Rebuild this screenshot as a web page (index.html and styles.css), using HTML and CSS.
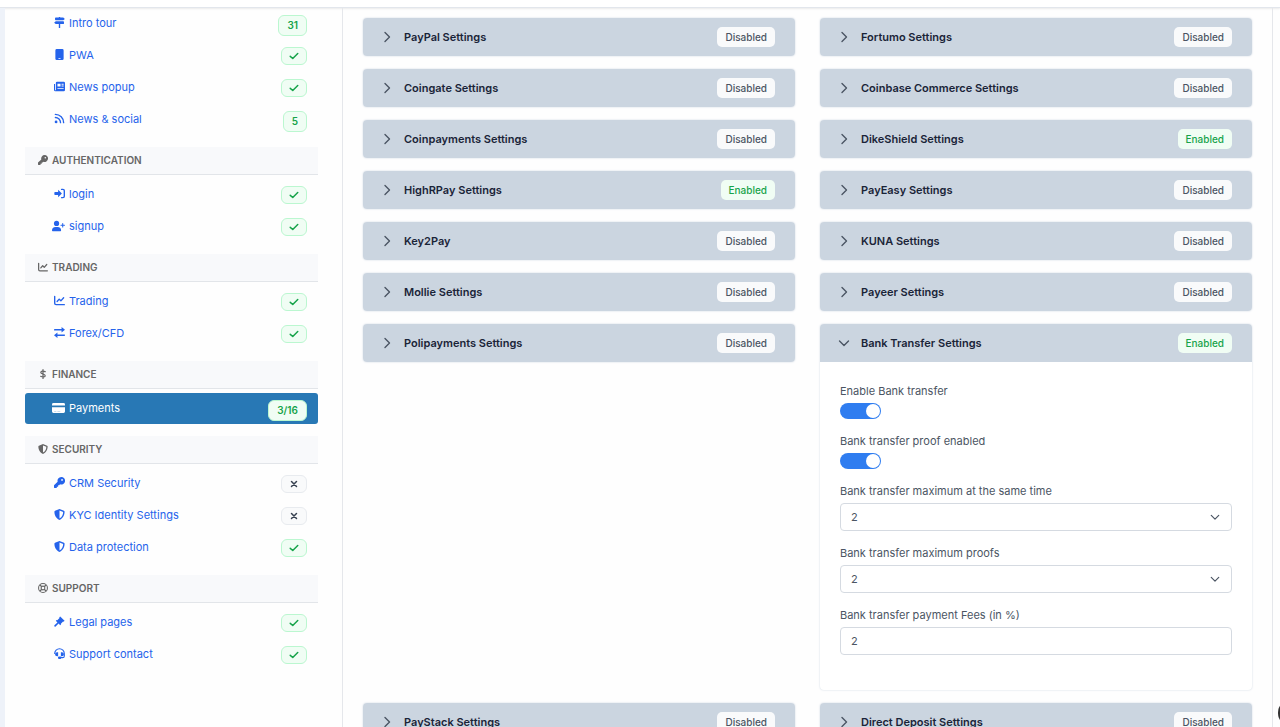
FILE: index.html
```
<!DOCTYPE html>
<html lang="en">
<head>
  <meta charset="UTF-8" />
  <meta name="viewport" content="width=device-width, initial-scale=1.0"/>
  <title>Payments - Settings</title>
  <link rel="stylesheet" href="styles.css">
</head>
<body>

  <!-- Icons -->
  <svg class="sprite" xmlns="http://www.w3.org/2000/svg">
    <symbol id="i-signs" viewBox="0 0 16 16"><path d="M7 0h2v.8h4.500l2.300 2-2.300 2H2.500a1 1 0 0 1-1-1v-2a1 1 0 0 1 1-1H7zM2.500 6.300h11a1 1 0 0 1 1 1v2a1 1 0 0 1-1 1h-11l-2.300-2zM7 10.300h2V16H7z"/></symbol>
    <symbol id="i-mobile" viewBox="0 0 16 16"><path fill-rule="evenodd" d="M4 0h8a2 2 0 0 1 2 2v12a2 2 0 0 1-2 2H4a2 2 0 0 1-2-2V2a2 2 0 0 1 2-2zM6.500 13.200v.8h3v-.8z"/></symbol>
    <symbol id="i-news" viewBox="0 0 16 16"><path fill-rule="evenodd" d="M5 1h9a2 2 0 0 1 2 2v10a2 2 0 0 1-2 2H2a2 2 0 0 1-2-2V4.500h1.500V13a.6.6 0 0 0 1.200 0V3A2 2 0 0 1 5 1zM5 4v4h4.500V4zM11 4v1.300h3V4zM11 6.700V8h3V6.700zM5 10v1.300h9V10z"/></symbol>
    <symbol id="i-rss" viewBox="0 0 16 16"><circle cx="3" cy="13" r="2"/><path fill="none" stroke="currentColor" stroke-width="2" stroke-linecap="round" d="M2 6.500A7.500 7.500 0 0 1 9.500 14M2 2a12 12 0 0 1 12 12"/></symbol>
    <symbol id="i-key" viewBox="0 0 16 16"><path fill-rule="evenodd" d="M10.500 0a5.500 5.500 0 1 1-1.700 10.700L7.500 12H6v2H4v2H.7a.7.700 0 0 1-.7-.7V12l5.300-5a5.500 5.500 0 0 1 5.200-7zM11.700 3a1.300 1.300 0 1 0 0 2.600 1.300 1.300 0 0 0 0-2.600z"/></symbol>
    <symbol id="i-login" viewBox="0 0 16 16"><path d="M6 2.500 11.500 8 6 13.500V10.200H1.500a1 1 0 0 1-1-1V6.800a1 1 0 0 1 1-1H6z"/><path fill="none" stroke="currentColor" stroke-width="2" stroke-linecap="round" d="M11 2h2a2 2 0 0 1 2 2v8a2 2 0 0 1-2 2h-2"/></symbol>
    <symbol id="i-user" viewBox="0 0 20 16"><circle cx="7" cy="4" r="4"/><path d="M5.500 9.500h3A5.500 5.500 0 0 1 14 15a1 1 0 0 1-1 1H1a1 1 0 0 1-1-1 5.500 5.500 0 0 1 5.500-5.500z"/><path fill="none" stroke="currentColor" stroke-width="1.600" stroke-linecap="round" d="M16.500 4v5.500M13.800 6.700h5.400"/></symbol>
    <symbol id="i-chart" viewBox="0 0 16 16"><path fill="none" stroke="currentColor" stroke-width="2" stroke-linecap="round" stroke-linejoin="round" d="M1 2v10a2 2 0 0 0 2 2h12M4.500 9.500 7.500 6l2.500 2.500L14 4"/></symbol>
    <symbol id="i-swap" viewBox="0 0 16 16"><path d="M11 0l5 4-5 4V5.200H1a1 1 0 0 1 0-2.200h10zM5 8v2.800h10a1 1 0 0 1 0 2.200H5V16l-5-4z"/></symbol>
    <symbol id="i-dollar" viewBox="0 0 16 16"><path fill="none" stroke="currentColor" stroke-width="2" stroke-linecap="round" d="M8 1v14M11.500 4.200C8 2.600 4.500 3 4.500 5.400c0 3.300 7 1.900 7 5.200 0 2.400-3.800 2.900-7.200 1.100"/></symbol>
    <symbol id="i-card" viewBox="0 0 18 16"><path d="M2 1h14a2 2 0 0 1 2 2v1.500H0V3a2 2 0 0 1 2-2z"/><path fill-rule="evenodd" d="M0 7h18v6a2 2 0 0 1-2 2H2a2 2 0 0 1-2-2zM3 12v.6h3V12zM7.500 12v.6h4V12z"/></symbol>
    <symbol id="i-shield" viewBox="0 0 16 16"><path fill-rule="evenodd" d="M8 0l6.500 2.600A1.500 1.500 0 0 1 15.400 4c0 4-1.600 9-7.400 12C2.200 13 .6 8 .6 4a1.500 1.500 0 0 1 .9-1.400zM8 2.200v11.500C12 11.400 13.300 8 13.300 4.300z"/></symbol>
    <symbol id="i-ring" viewBox="0 0 16 16"><g fill="none" stroke="currentColor" stroke-width="1.700"><circle cx="8" cy="8" r="7.100"/><circle cx="8" cy="8" r="3"/><path stroke-width="2.200" d="M3 3l3 3M13 3l-3 3M3 13l3-3M13 13l-3-3"/></g></symbol>
    <symbol id="i-gavel" viewBox="0 0 16 16"><path d="M9 .6l6.400 6.400-1.300 1.300-.9-.3-3.200 3.200.3.900L9 13.400 6.700 11l-4.300 4.400a1.300 1.300 0 0 1-1.800-1.800L5 9.300 2.600 7l1.300-1.300.9.300L8 2.800l-.3-.9z"/></symbol>
    <symbol id="i-headset" viewBox="0 0 16 16"><path fill="none" stroke="currentColor" stroke-width="1.600" stroke-linecap="round" d="M1 8a7 7 0 0 1 14 0v3.500a2.500 2.500 0 0 1-2.500 2.500H9"/><path d="M4.500 6H6v6H4.500a3 3 0 0 1 0-6zM10 6h1.500a3 3 0 0 1 0 6H10zM7.500 12.500H10V16H7.500a1.700 1.700 0 0 1 0-3.500z"/></symbol>
    <symbol id="i-check" viewBox="0 0 16 16"><path fill="none" stroke="currentColor" stroke-width="2.400" stroke-linecap="round" stroke-linejoin="round" d="M2 8.500 6 12l8-8"/></symbol>
    <symbol id="i-times" viewBox="0 0 16 16"><path fill="none" stroke="currentColor" stroke-width="2.400" stroke-linecap="round" d="M4 4l8 8M12 4l-8 8"/></symbol>
    <symbol id="i-chevron" viewBox="0 0 12 12"><path fill="none" stroke="currentColor" stroke-width="1.400" stroke-linecap="round" stroke-linejoin="round" d="M4 1.500 8.500 6 4 10.500"/></symbol>
  </svg>

  <header class="topbar"></header>

  <div class="layout">
    <nav class="sidebar">
      <ul>
        <li><a href="#"><svg><use href="#i-signs"/></svg>Intro tour<span class="badge on count">31</span></a></li>
        <li><a href="#"><svg><use href="#i-mobile"/></svg>PWA<span class="badge on"><svg><use href="#i-check"/></svg></span></a></li>
        <li><a href="#"><svg><use href="#i-news"/></svg>News popup<span class="badge on"><svg><use href="#i-check"/></svg></span></a></li>
        <li><a href="#"><svg><use href="#i-rss"/></svg>News &amp; social<span class="badge on count">5</span></a></li>
      </ul>

      <h3><svg><use href="#i-key"/></svg>Authentication</h3>
      <ul>
        <li><a href="#"><svg><use href="#i-login"/></svg>login<span class="badge on"><svg><use href="#i-check"/></svg></span></a></li>
        <li><a href="#"><svg class="wide"><use href="#i-user"/></svg>signup<span class="badge on"><svg><use href="#i-check"/></svg></span></a></li>
      </ul>

      <h3><svg><use href="#i-chart"/></svg>Trading</h3>
      <ul>
        <li><a href="#"><svg><use href="#i-chart"/></svg>Trading<span class="badge on"><svg><use href="#i-check"/></svg></span></a></li>
        <li><a href="#"><svg><use href="#i-swap"/></svg>Forex/CFD<span class="badge on"><svg><use href="#i-check"/></svg></span></a></li>
      </ul>

      <h3><svg><use href="#i-dollar"/></svg>Finance</h3>
      <ul>
        <li><a href="#" class="active"><svg class="wide"><use href="#i-card"/></svg>Payments<span class="badge on count">3/16</span></a></li>
      </ul>

      <h3><svg><use href="#i-shield"/></svg>Security</h3>
      <ul>
        <li><a href="#"><svg><use href="#i-key"/></svg>CRM Security<span class="badge off"><svg><use href="#i-times"/></svg></span></a></li>
        <li><a href="#"><svg><use href="#i-shield"/></svg>KYC Identity Settings<span class="badge off"><svg><use href="#i-times"/></svg></span></a></li>
        <li><a href="#"><svg><use href="#i-shield"/></svg>Data protection<span class="badge on"><svg><use href="#i-check"/></svg></span></a></li>
      </ul>

      <h3><svg><use href="#i-ring"/></svg>Support</h3>
      <ul>
        <li><a href="#"><svg><use href="#i-gavel"/></svg>Legal pages<span class="badge on"><svg><use href="#i-check"/></svg></span></a></li>
        <li><a href="#"><svg><use href="#i-headset"/></svg>Support contact<span class="badge on"><svg><use href="#i-check"/></svg></span></a></li>
      </ul>
    </nav>

    <main class="content">
      <details class="card"><summary><svg><use href="#i-chevron"/></svg>PayPal Settings<span class="status">Disabled</span></summary></details>
      <details class="card"><summary><svg><use href="#i-chevron"/></svg>Fortumo Settings<span class="status">Disabled</span></summary></details>
      <details class="card"><summary><svg><use href="#i-chevron"/></svg>Coingate Settings<span class="status">Disabled</span></summary></details>
      <details class="card"><summary><svg><use href="#i-chevron"/></svg>Coinbase Commerce Settings<span class="status">Disabled</span></summary></details>
      <details class="card"><summary><svg><use href="#i-chevron"/></svg>Coinpayments Settings<span class="status">Disabled</span></summary></details>
      <details class="card"><summary><svg><use href="#i-chevron"/></svg>DikeShield Settings<span class="status enabled">Enabled</span></summary></details>
      <details class="card"><summary><svg><use href="#i-chevron"/></svg>HighRPay Settings<span class="status enabled">Enabled</span></summary></details>
      <details class="card"><summary><svg><use href="#i-chevron"/></svg>PayEasy Settings<span class="status">Disabled</span></summary></details>
      <details class="card"><summary><svg><use href="#i-chevron"/></svg>Key2Pay<span class="status">Disabled</span></summary></details>
      <details class="card"><summary><svg><use href="#i-chevron"/></svg>KUNA Settings<span class="status">Disabled</span></summary></details>
      <details class="card"><summary><svg><use href="#i-chevron"/></svg>Mollie Settings<span class="status">Disabled</span></summary></details>
      <details class="card"><summary><svg><use href="#i-chevron"/></svg>Payeer Settings<span class="status">Disabled</span></summary></details>
      <details class="card"><summary><svg><use href="#i-chevron"/></svg>Polipayments Settings<span class="status">Disabled</span></summary></details>
      <details class="card" open>
        <summary><svg><use href="#i-chevron"/></svg>Bank Transfer Settings<span class="status enabled">Enabled</span></summary>
        <form class="card-body">
          <div class="field">
            <label for="bankEnabled">Enable Bank transfer</label>
            <input type="checkbox" class="switch" id="bankEnabled" checked />
          </div>
          <div class="field">
            <label for="bankProof">Bank transfer proof enabled</label>
            <input type="checkbox" class="switch" id="bankProof" checked />
          </div>
          <div class="field">
            <label for="bankMax">Bank transfer maximum at the same time</label>
            <div class="select">
              <select id="bankMax"><option>1</option><option selected>2</option><option>3</option></select>
              <svg><use href="#i-chevron"/></svg>
            </div>
          </div>
          <div class="field">
            <label for="bankMaxProofs">Bank transfer maximum proofs</label>
            <div class="select">
              <select id="bankMaxProofs"><option>1</option><option selected>2</option><option>3</option></select>
              <svg><use href="#i-chevron"/></svg>
            </div>
          </div>
          <div class="field">
            <label for="bankFees">Bank transfer payment Fees (in %)</label>
            <input type="text" id="bankFees" value="2" />
          </div>
        </form>
      </details>
      <details class="card"><summary><svg><use href="#i-chevron"/></svg>PayStack Settings<span class="status">Disabled</span></summary></details>
      <details class="card"><summary><svg><use href="#i-chevron"/></svg>Direct Deposit Settings<span class="status">Disabled</span></summary></details>
    </main>
  </div>

  <button class="help" aria-label="Help"></button>

</body>
</html>
```

FILE: styles.css
```
* {
  box-sizing: border-box;
}

body {
  margin: 0;
  height: 100vh;
  overflow: hidden;
  font-family: Inter, "Liberation Sans", sans-serif;
  font-size: 11px;
  color: #4b5563;
  background: #fefefe;
}

.sprite {
  display: none;
}

svg {
  fill: currentColor;
  flex: none;
}

.topbar {
  height: 8px;
  background: #fff;
  border-bottom: 1px solid #e2e6ec;
  box-shadow: 0 1px 2px rgba(0,0,0,0.08);
}

.layout {
  display: flex;
  margin-right: 7px;
  border-left: 5px solid #eef2f9;
  border-right: 1px solid #e5e7eb;
}

/* Sidebar */
.sidebar {
  width: 338px;
  flex: none;
  padding: 0 24px 0 20px;
  border-right: 1px solid #e5e7eb;
}

.sidebar ul {
  display: flex;
  flex-direction: column;
  gap: 1px;
  list-style: none;
  margin: 0 0 12px;
  padding: 0;
}

.sidebar h3 {
  display: flex;
  align-items: center;
  gap: 4px;
  height: 28px;
  margin: 0 0 4px;
  padding: 0 13px 2px;
  font-size: 10px;
  font-weight: 600;
  text-transform: uppercase;
  color: #666;
  background: #f8f9fb;
  border-bottom: 1px solid #e2e5e9;
}

.sidebar h3 svg {
  width: 10px;
  height: 10px;
}

.sidebar a {
  display: flex;
  align-items: center;
  gap: 4px;
  height: 31px;
  padding: 0 11px 2px 29px;
  border-radius: 3px;
  color: #2563eb;
  text-decoration: none;
}

.sidebar a > svg {
  width: 11px;
  height: 11px;
}

.sidebar a > svg.wide {
  width: 13px;
  height: 12px;
  margin-left: -2px;
}

.sidebar a.active {
  background: #2878b5;
  color: #fff;
}

.badge {
  display: flex;
  align-items: center;
  height: 18px;
  margin: 2px 0 0 auto;
  padding: 0 7px;
  border: 1px solid #bbf7d0;
  border-radius: 6px;
  background: #f0fdf4;
  color: #16a34a;
}

.badge svg {
  width: 10px;
  height: 10px;
}

.badge.off {
  border-color: #e8ebef;
  background: #f9fafb;
  color: #374151;
}

.badge.count {
  height: 21px;
  margin-top: 5px;
  padding: 0 8px;
  font-size: 10px;
  font-weight: 600;
}

/* Payment cards */
.content {
  flex: 1;
  display: grid;
  grid-template-columns: 1fr 1fr;
  gap: 13px 25px;
  align-items: start;
  padding: 10px 20px;
}

.card {
  border-radius: 4px;
  background: #fff;
  box-shadow: 0 0 2px #cbd5e1;
}

.card summary {
  display: flex;
  align-items: center;
  height: 38px;
  padding: 0 20px 1px 18px;
  border-radius: 4px;
  background: #cbd5e0;
  color: #1a2438;
  font-size: 11px;
  font-weight: 600;
  list-style: none;
  cursor: pointer;
}

.card summary svg {
  width: 12px;
  height: 12px;
  margin-right: 11px;
  color: #4b5563;
}

.card[open] summary {
  border-radius: 4px 4px 0 0;
}

.card[open] summary svg {
  transform: rotate(90deg);
}

.status {
  margin-left: auto;
  padding: 3px 8px;
  border-radius: 5px;
  background: #f9fafb;
  color: #4b5563;
  font-size: 10px;
  font-weight: 500;
  line-height: 14px;
}

.status.enabled {
  background: #f0fdf4;
  color: #16a34a;
}

.card-body {
  display: flex;
  flex-direction: column;
  gap: 14px;
  padding: 21px 20px 35px;
}

.field {
  display: flex;
  flex-direction: column;
  gap: 3px;
}

.field label {
  line-height: 17px;
}

.switch {
  appearance: none;
  width: 41px;
  height: 16px;
  margin: 0;
  padding: 1px;
  border-radius: 8px;
  background: #cbd5e1;
}

.switch::before {
  content: "";
  display: block;
  width: 14px;
  height: 14px;
  border-radius: 50%;
  background: #fff;
}

.switch:checked {
  background: #2f7df0;
}

.switch:checked::before {
  margin-left: auto;
}

.field select,
.field input[type="text"] {
  appearance: none;
  display: block;
  width: 100%;
  height: 28px;
  padding: 0 10px;
  border: 1px solid #d5dae1;
  border-radius: 4px;
  background: #fff;
  color: #4b5563;
  font: inherit;
}

.select {
  position: relative;
}

.select svg {
  position: absolute;
  top: 9px;
  right: 12px;
  width: 10px;
  height: 10px;
  transform: rotate(90deg);
  pointer-events: none;
}

.help {
  position: fixed;
  right: -26px;
  bottom: 0;
  width: 28px;
  height: 28px;
  padding: 0;
  border: none;
  border-radius: 50%;
  background: #333;
}
```
